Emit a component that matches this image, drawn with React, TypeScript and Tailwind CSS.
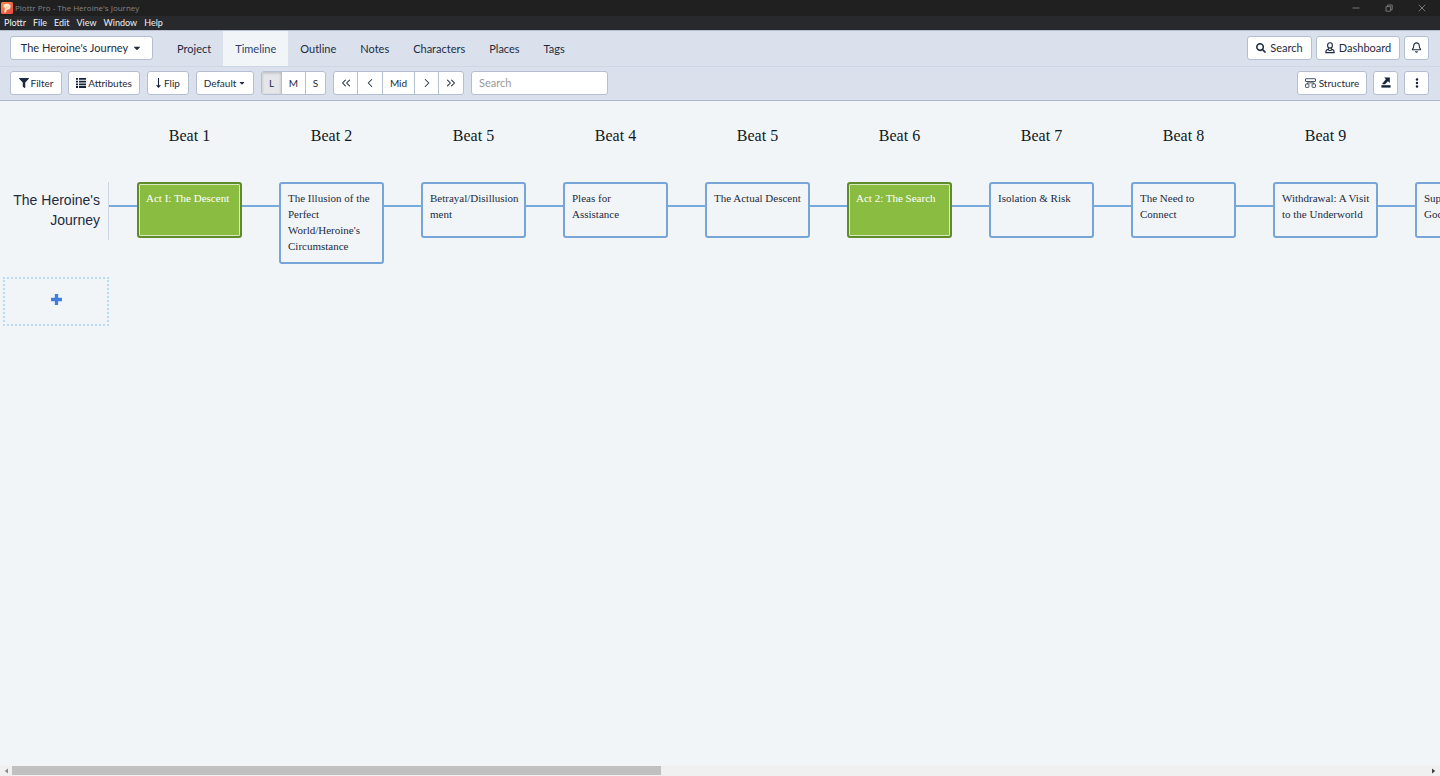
import type { ReactNode } from "react";
import { FaFilter, FaSearch, FaCaretDown } from "react-icons/fa";
import { ChevronLeft, ChevronRight, ChevronsLeft, ChevronsRight, Bell } from "lucide-react";

const menus = ["Plottr", "File", "Edit", "View", "Window", "Help"];
const tabs = ["Project", "Timeline", "Outline", "Notes", "Characters", "Places", "Tags"];

const beats = [
  { title: "Beat 1", lines: ["Act I: The Descent"], act: true },
  { title: "Beat 2", lines: ["The Illusion of the", "Perfect", "World/Heroine's", "Circumstance"], act: false },
  { title: "Beat 5", lines: ["Betrayal/Disillusion", "ment"], act: false },
  { title: "Beat 4", lines: ["Pleas for", "Assistance"], act: false },
  { title: "Beat 5", lines: ["The Actual Descent"], act: false },
  { title: "Beat 6", lines: ["Act 2: The Search"], act: true },
  { title: "Beat 7", lines: ["Isolation & Risk"], act: false },
  { title: "Beat 8", lines: ["The Need to", "Connect"], act: false },
  { title: "Beat 9", lines: ["Withdrawal: A Visit", "to the Underworld"], act: false },
  { title: "", lines: ["Support of the", "Goddess"], act: false },
];

const btn =
  "flex h-6 shrink-0 items-center justify-center rounded-[3px] border border-[#b4bfd1] bg-white leading-4 text-[#1d2b40]";
const seg =
  "flex h-full items-center justify-center border-r border-[#b4bfd1] last:border-r-0 text-[10px] leading-4 text-[#1d2b40]";

function Logo() {
  return (
    <svg viewBox="0 0 12 12" className="size-3 shrink-0" aria-hidden="true">
      <defs>
        <linearGradient id="logo" x1="0" y1="0" x2="1" y2="1">
          <stop offset="0" stopColor="#f58a4b" />
          <stop offset="1" stopColor="#e8483f" />
        </linearGradient>
      </defs>
      <rect width="12" height="12" rx="1.5" fill="url(#logo)" />
      <path d="M2.6 2.8C5 1.2 9.8 1.4 9.6 4.6C9.4 7.2 7.4 7.8 5.8 7.6L5 10.4L3.2 10.6L4 5.4L2.6 5.6Z" fill="#ffe9cf" />
      <path d="M5 6.4L7.6 3.8" stroke="#f0905a" strokeWidth="0.6" fill="none" />
    </svg>
  );
}

function ListIcon() {
  return (
    <svg viewBox="0 0 10 10" className="size-2.5" fill="#14233b" aria-hidden="true">
      <path d="M0 0h2v1.8H0zM3 0h7v1.8H3zM0 2.7h2v1.8H0zM3 2.7h7v1.8H3zM0 5.4h2v1.8H0zM3 5.4h7v1.8H3zM0 8.1h2v1.8H0zM3 8.1h7v1.8H3z" />
    </svg>
  );
}

function StructureIcon() {
  return (
    <svg viewBox="0 0 11 10" className="h-2.5 w-[11px]" fill="none" stroke="#33435a" strokeWidth="0.9" aria-hidden="true">
      <rect x="0.5" y="0.7" width="10" height="2.8" rx="0.3" />
      <rect x="0.5" y="6" width="3.4" height="3.4" rx="0.6" />
      <rect x="7.1" y="6" width="3.4" height="3.4" rx="0.6" />
      <path d="M2.2 6V4.9h6.6V6" />
    </svg>
  );
}

function PersonIcon() {
  return (
    <svg viewBox="0 0 10 12" className="h-3 w-2.5" fill="none" stroke="#1d2b40" strokeWidth="1.1" aria-hidden="true">
      <ellipse cx="5" cy="3.4" rx="2.4" ry="2.7" />
      <path d="M3 7.2C1.4 7.6 0.8 8.8 0.8 10.6H9.2C9.2 8.8 8.6 7.6 7 7.2" />
      <path d="M3.8 6.2L3 7.6C4 8.8 6 8.8 7 7.6L6.2 6.2" />
    </svg>
  );
}

function ExportIcon() {
  return (
    <svg viewBox="0 0 10 11" className="h-[11px] w-2.5" fill="#14233b" aria-hidden="true">
      <path d="M0.4 8.2h9.2v2.4H0.4z" />
      <path d="M3.2 0.4H8.8V6L6.9 4.3 4 7.2H1.4V6.4L4.9 2.2z" />
    </svg>
  );
}

function DotsIcon() {
  return (
    <svg viewBox="0 0 4 10" className="h-2.5 w-1" fill="#14233b" aria-hidden="true">
      <circle cx="2" cy="1.5" r="1.2" />
      <circle cx="2" cy="5" r="1.2" />
      <circle cx="2" cy="8.5" r="1.2" />
    </svg>
  );
}

function WindowButton({ label, children }: { label: string; children: ReactNode }) {
  return (
    <button aria-label={label} className="flex h-4 w-[33px] items-center justify-center">
      <svg viewBox="0 0 8 8" className="size-2" fill="none" stroke="#8c8c8c" strokeWidth="0.8" aria-hidden="true">
        {children}
      </svg>
    </button>
  );
}

export default function App() {
  return (
    <div className="flex min-h-screen flex-col overflow-hidden bg-[#f1f5f8] font-['Lato',sans-serif] text-[#1d2b40]">
      <header>
        <div className="flex h-4 items-center bg-[#202020] pl-px">
          <Logo />
          <span className="ml-0.5 font-['Open_Sans',sans-serif] text-[8px] leading-4 text-[#848484]">
            Plottr Pro - The Heroine's Journey
          </span>
          <div className="ml-auto flex pr-0.5">
            <WindowButton label="Minimize">
              <path d="M0.5 4h7" />
            </WindowButton>
            <WindowButton label="Restore">
              <path d="M1 2.6h4.6v4.6H1zM2.6 2.4V1h4.6v4.6H5.8" />
            </WindowButton>
            <WindowButton label="Close">
              <path d="M0.8 0.8l6.4 6.4M7.2 0.8L0.8 7.2" />
            </WindowButton>
          </div>
        </div>
        <div className="flex h-3.5 items-center gap-[7px] bg-[#28292d] pl-1">
          {menus.map((m) => (
            <button key={m} className="text-[9px] leading-3 text-[#f0f0f0]">
              {m}
            </button>
          ))}
        </div>
      </header>

      <nav className="flex h-[37px] items-center border-y border-t-[#b4bfd1] border-b-[#ccd6e4] bg-[#dae1ec] pr-[11px] pl-2.5">
        <button className="mb-0.5 flex h-6 w-[143px] items-center justify-center gap-1 rounded-[3px] border border-[#b4bfd1] bg-white text-[11px] leading-4">
          The Heroine's Journey
          <FaCaretDown className="size-2.5" />
        </button>
        <div className="ml-3 flex h-full">
          {tabs.map((t) => (
            <a
              key={t}
              href="#"
              className={
                t === "Timeline"
                  ? "flex items-center bg-[#f1f5f8] px-3 text-[11px] leading-4 text-[#2c4170]"
                  : "flex items-center px-3 text-[11px] leading-4 text-[#1d2b40]"
              }
            >
              {t}
            </a>
          ))}
        </div>
        <div className="mb-0.5 ml-auto flex items-center gap-1">
          <button className={`${btn} w-[65px] gap-1 text-[11px]`}>
            <FaSearch className="size-2.5" />
            Search
          </button>
          <button className={`${btn} w-[84px] gap-1 text-[11px]`}>
            <PersonIcon />
            Dashboard
          </button>
          <button aria-label="Notifications" className={`${btn} w-[25px]`}>
            <Bell className="size-[11px]" strokeWidth={2.4} />
          </button>
        </div>
      </nav>

      <div className="flex h-[34px] items-center border-b border-[#a9b8cf] bg-[#dae1ec] pr-[11px] pb-0.5 pl-2.5">
        <button className={`${btn} w-[52px] gap-0.5 text-[10px]`}>
          <FaFilter className="size-2.5" />
          Filter
        </button>
        <button className={`${btn} ml-1.5 w-[72px] gap-0.5 text-[10px]`}>
          <ListIcon />
          Attributes
        </button>
        <button className={`${btn} ml-[7px] w-[42px] gap-[3px] text-[10px]`}>
          <svg viewBox="0 0 5 10" className="h-2.5 w-[5px]" fill="none" stroke="#14233b" strokeWidth="1.1" aria-hidden="true">
            <path d="M2.5 0v9M0.6 7.2L2.5 9.2L4.4 7.2" />
          </svg>
          Flip
        </button>
        <button className={`${btn} ml-[7px] w-[58px] gap-0.5 text-[10px]`}>
          Default
          <FaCaretDown className="size-2" />
        </button>
        <div className="ml-[7px] flex h-6 overflow-hidden rounded-[3px] border border-[#b4bfd1] bg-white">
          <button className={`${seg} w-5 bg-[#e4e6ea] shadow-[inset_0_1px_3px_#0003]`}>L</button>
          <button className={`${seg} w-6`}>M</button>
          <button className={`${seg} w-[19px]`}>S</button>
        </div>
        <div className="ml-[7px] flex h-6 overflow-hidden rounded-[3px] border border-[#b4bfd1] bg-white">
          <button aria-label="First" className={`${seg} w-6`}>
            <ChevronsLeft className="size-3.5" strokeWidth={1.75} />
          </button>
          <button aria-label="Previous" className={`${seg} w-[25px]`}>
            <ChevronLeft className="size-3.5" strokeWidth={1.75} />
          </button>
          <button className={`${seg} w-8`}>Mid</button>
          <button aria-label="Next" className={`${seg} w-6`}>
            <ChevronRight className="size-3.5" strokeWidth={1.75} />
          </button>
          <button aria-label="Last" className={`${seg} w-6`}>
            <ChevronsRight className="size-3.5" strokeWidth={1.75} />
          </button>
        </div>
        <input
          type="text"
          aria-label="Search"
          placeholder="Search"
          className="ml-[7px] h-6 w-[137px] rounded-[3px] border border-[#b4bfd1] bg-white px-[7px] text-[11px] leading-4 placeholder:text-[#999999]"
        />
        <div className="ml-auto flex items-center gap-1.5">
          <button className={`${btn} w-[70px] gap-[3px] text-[10px]`}>
            <StructureIcon />
            Structure
          </button>
          <button aria-label="Export" className={`${btn} w-[25px]`}>
            <ExportIcon />
          </button>
          <button aria-label="More" className={`${btn} w-[25px]`}>
            <DotsIcon />
          </button>
        </div>
      </div>

      <main className="flex-1 overflow-hidden">
        <div className="flex gap-[37px] pt-[23px] pl-[137px]">
          {beats.map((b, i) => (
            <h2 key={i} className="h-[58px] w-[105px] shrink-0 text-center font-['Liberation_Serif',serif] text-[16px] leading-6 text-[#111820]">
              {b.title}
            </h2>
          ))}
        </div>
        <div className="flex items-start">
          <div className="flex h-[58px] w-[109px] shrink-0 items-center justify-end border-r border-[#ccd6e4] pr-2 pb-0.5">
            <h3 className="text-right font-['Liberation_Sans',sans-serif] text-[14px] leading-5">
              The Heroine's
              <br />
              Journey
            </h3>
          </div>
          <div className="mt-[23px] h-0.5 w-7 shrink-0 bg-[#78aade]" />
          {beats.map((b, i) => (
            <div key={i} className="flex shrink-0 items-start">
              <article
                className={
                  b.act
                    ? "min-h-[56px] w-[105px] rounded-[3px] border-2 border-[#5f8c2a] bg-[#8abc41] px-[7px] pt-1.5 pb-2 font-['Liberation_Serif',serif] text-[11px] leading-4 whitespace-nowrap text-white shadow-[inset_0_0_0_1px_#d9eabf]"
                    : "min-h-[56px] w-[105px] rounded-[3px] border-2 border-[#78a5d8] px-[7px] pt-1.5 pb-2 font-['Liberation_Serif',serif] text-[11px] leading-4 whitespace-nowrap text-[#1d2b40]"
                }
              >
                {b.lines.map((line) => (
                  <p key={line}>{line}</p>
                ))}
              </article>
              <div className="mt-[23px] h-0.5 w-[37px] bg-[#78aade]" />
            </div>
          ))}
        </div>
        <button
          aria-label="Add plotline"
          className="mt-[13px] ml-[3px] flex h-[49px] w-[106px] items-center justify-center border-2 border-dotted border-[#bcdcf3] pb-1"
        >
          <svg viewBox="0 0 10 10" className="size-[11px]" fill="#3f7fe0" aria-hidden="true">
            <path d="M3.5 0h3v3.5H10v3H6.5V10h-3V6.5H0v-3h3.5z" />
          </svg>
        </button>
      </main>

      <div className="flex h-2.5 items-center bg-[#f0f0f0]">
        <button aria-label="Scroll left" className="flex w-3 shrink-0 justify-center">
          <svg viewBox="0 0 4 6" className="h-1.5 w-1" fill="#8a8a8a" aria-hidden="true">
            <path d="M4 0.5v5L0.8 3z" />
          </svg>
        </button>
        <div className="h-full flex-1">
          <div className="h-[9px] w-[45.8%] bg-[#c0c0c0]" />
        </div>
        <button aria-label="Scroll right" className="flex w-3 shrink-0 justify-center">
          <svg viewBox="0 0 4 6" className="h-1.5 w-1" fill="#404040" aria-hidden="true">
            <path d="M0 0.5v5L3.2 3z" />
          </svg>
        </button>
      </div>
    </div>
  );
}
